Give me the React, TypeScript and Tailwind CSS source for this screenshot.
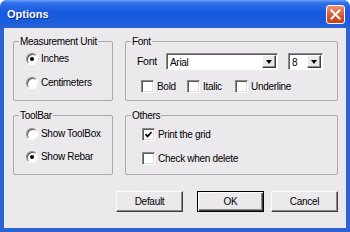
import React from "react";

function Radio({ checked, label }: { checked?: boolean; label: string }) {
  return (
    <div className="flex h-[13px] items-center">
      <span className="flex h-[12px] w-[12px] items-center justify-center rounded-full border border-b-white border-l-[#8a8a8a] border-r-white border-t-[#8a8a8a] bg-white shadow-[inset_1px_1px_0_#5a5a5a]">
        {checked && <span className="h-[4px] w-[4px] rounded-full bg-black" />}
      </span>
      <span className="ml-[3px]">{label}</span>
    </div>
  );
}

function Check({ checked, label, className = "" }: { checked?: boolean; label: string; className?: string }) {
  return (
    <div className={`flex h-[13px] items-center ${className}`}>
      <span className="flex h-[13px] w-[13px] shrink-0 items-center justify-center border border-b-white border-l-[#8a8a8a] border-r-white border-t-[#8a8a8a] bg-white shadow-[inset_1px_1px_0_#5a5a5a,inset_-1px_-1px_0_#dcdcdc]">
        {checked && (
          <svg viewBox="0 0 7 7" className="h-[7px] w-[7px]" aria-hidden="true">
            <path d="M0.5 3.2 L2.6 5.4 L6.5 1" stroke="black" strokeWidth="1.7" fill="none" />
          </svg>
        )}
      </span>
      <span className="ml-[3px]">{label}</span>
    </div>
  );
}

function Combo({ value, className }: { value: string; className: string }) {
  return (
    <div className={`flex h-[17px] items-stretch border border-b-white border-l-[#8a8a8a] border-r-white border-t-[#8a8a8a] bg-white shadow-[inset_1px_1px_0_#5a5a5a] ${className}`}>
      <span className="flex flex-1 items-center pl-[3px] pt-[1px]">{value}</span>
      <span className="my-[1px] mr-[1px] flex w-[14px] items-center justify-center border border-b-[#404040] border-l-white border-r-[#404040] border-t-white bg-[#ece9ed] shadow-[inset_-1px_-1px_0_#8a8a8a]">
        <span className="h-0 w-0 border-l-[3.5px] border-r-[3.5px] border-t-[4px] border-l-transparent border-r-transparent border-t-black" />
      </span>
    </div>
  );
}

function Group({ title, children }: { title: string; children: React.ReactNode }) {
  return (
    <fieldset className="h-[66px] min-w-0 rounded-[2px] border border-[#a9a8ad]">
      <legend className="ml-[5px] px-[1px] leading-[13px]">{title}</legend>
      {children}
    </fieldset>
  );
}

export default function App() {
  return (
    <div className="flex h-[232px] w-[350px] flex-col overflow-hidden rounded-t-[7px] bg-[#2c63d6] font-['Liberation_Sans',Arial,sans-serif] text-[10px] tracking-[-0.3px] text-black">
      <div className="flex h-[28px] shrink-0 items-center justify-between bg-[linear-gradient(to_bottom,#6aa4f8_0%,#2f6fe8_10%,#1559de_45%,#1a5ddc_80%,#2c63d6_100%)] pl-[7px] pr-[5px]">
        <span className="text-[11px] font-bold tracking-normal text-white [text-shadow:1px_1px_0_#0a2f8a]">Options</span>
        <span className="flex h-[19px] w-[19px] items-center justify-center rounded-[3px] border border-white bg-[linear-gradient(to_bottom,#ef9174,#d9512c_60%,#c9401c)]">
          <svg viewBox="0 0 11 11" className="h-[11px] w-[11px]" aria-hidden="true">
            <path d="M1.5 1.5 L9.5 9.5 M9.5 1.5 L1.5 9.5" stroke="white" strokeWidth="2" strokeLinecap="square" />
          </svg>
        </span>
      </div>
      <div className="mx-[4px] mb-[4px] flex-1 bg-[#ece9ed] pl-[9px] pr-[8px] pt-[7px]">
        <div className="grid grid-cols-[100px_213px] gap-x-[12px] gap-y-[8px]">
          <Group title="Measurement Unit">
            <div className="flex flex-col gap-[11px] pl-[12px] pt-[4px]">
              <Radio checked label="Inches" />
              <Radio label="Centimeters" />
            </div>
          </Group>
          <Group title="Font">
            <div className="flex items-center pl-[11px] pt-[5px]">
              <span className="w-[29px] text-[10.5px]">Font</span>
              <Combo value="Arial" className="w-[112px]" />
              <Combo value="8" className="ml-[10px] w-[35px]" />
            </div>
            <div className="mt-[10px] flex pl-[15px]">
              <Check label="Bold" className="w-[46px]" />
              <Check label="Italic" className="w-[48px]" />
              <Check label="Underline" />
            </div>
          </Group>
          <Group title="ToolBar">
            <div className="flex flex-col gap-[10px] pl-[12px] pt-[5px]">
              <Radio label="Show ToolBox" />
              <Radio checked label="Show Rebar" />
            </div>
          </Group>
          <Group title="Others">
            <div className="flex flex-col gap-[11px] pl-[16px] pt-[6px]">
              <Check checked label="Print the grid" />
              <Check label="Check when delete" />
            </div>
          </Group>
        </div>
        <div className="mt-[16px] flex justify-end">
          <button className="h-[21px] w-[67px] border border-b-[#404040] border-l-white border-r-[#404040] border-t-white bg-[#ece9ed] shadow-[inset_-1px_-1px_0_#8a8a8a]">
            Default
          </button>
          <button className="ml-[14px] h-[21px] w-[67px] border border-black bg-[#ece9ed] shadow-[inset_1px_1px_0_#fff,inset_-1px_-1px_0_#404040,inset_-2px_-2px_0_#8a8a8a]">
            OK
          </button>
          <button className="ml-[7px] h-[21px] w-[67px] border border-b-[#404040] border-l-white border-r-[#404040] border-t-white bg-[#ece9ed] shadow-[inset_-1px_-1px_0_#8a8a8a]">
            Cancel
          </button>
        </div>
      </div>
    </div>
  );
}
